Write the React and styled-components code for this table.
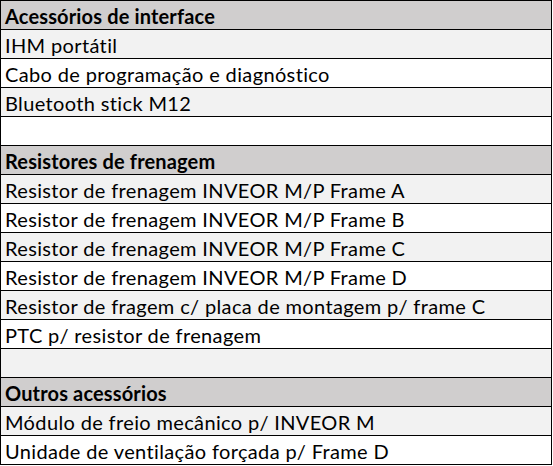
import React from 'react'
import styled, { createGlobalStyle } from 'styled-components'

const GlobalStyle = createGlobalStyle`
  html, body {
    margin: 0;
    padding: 0;
    background: #ffffff;
  }
`

const Table = styled.div`
  width: 552px;
  box-sizing: border-box;
  border: 1px solid #000;
  border-bottom: none;
  font-family: Lato, "Open Sans", sans-serif;
  color: #000;
`

const Row = styled.div`
  box-sizing: border-box;
  height: 29px;
  border-bottom: 1px solid #000;
  display: flex;
  align-items: center;
  padding-left: 4px;
  padding-top: 1px;
  font-size: 20px;
  font-weight: ${p => (p.$head ? 700 : 400)};
  letter-spacing: ${p => (p.$head ? '0.15px' : '0.36px')};
  background: ${p => (p.$head ? '#d0cece' : p.$shade ? '#f2f2f2' : '#ffffff')};
  white-space: nowrap;
`

const rows = [
  { text: 'Acessórios de interface', head: true },
  { text: 'IHM portátil', shade: true },
  { text: 'Cabo de programação e diagnóstico' },
  { text: 'Bluetooth stick M12', shade: true },
  { text: '' },
  { text: 'Resistores de frenagem', head: true },
  { text: 'Resistor de frenagem INVEOR M/P Frame A', shade: true },
  { text: 'Resistor de frenagem INVEOR M/P Frame B' },
  { text: 'Resistor de frenagem INVEOR M/P Frame C', shade: true },
  { text: 'Resistor de frenagem INVEOR M/P Frame D' },
  { text: 'Resistor de fragem c/ placa de montagem p/ frame C', shade: true },
  { text: 'PTC p/ resistor de frenagem' },
  { text: '', shade: true },
  { text: 'Outros acessórios', head: true },
  { text: 'Módulo de freio mecânico p/ INVEOR M', shade: true },
  { text: 'Unidade de ventilação forçada p/ Frame D' },
]

const App = () => (
  <>
    <GlobalStyle />
    <Table>
      {rows.map((r, i) => (
        <Row key={i} $head={r.head} $shade={r.shade}>
          {r.text}
        </Row>
      ))}
    </Table>
  </>
)

export default App
